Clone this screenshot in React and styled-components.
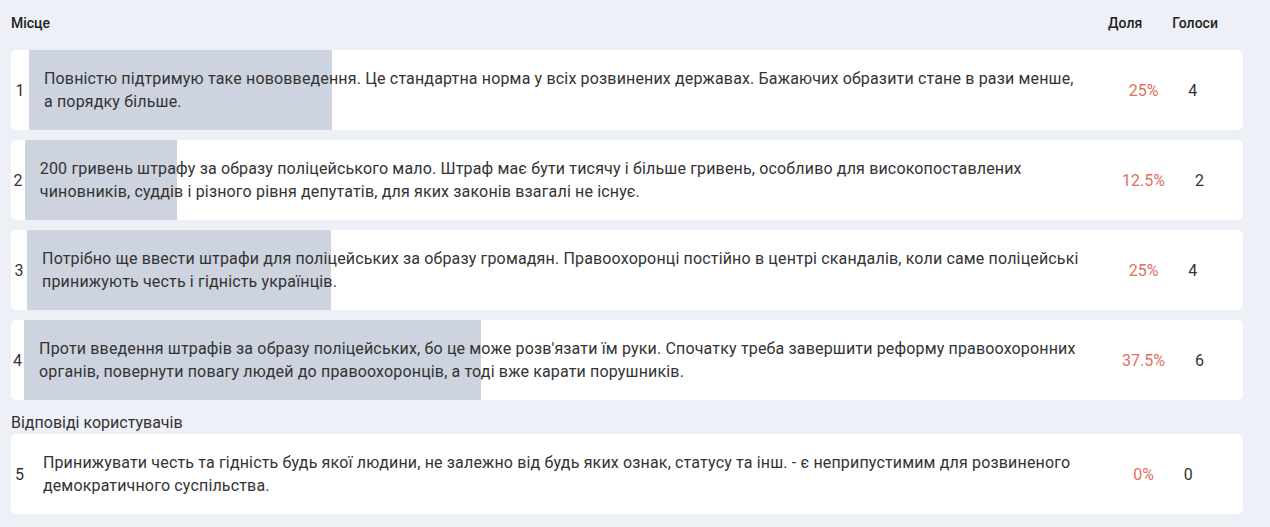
import React from "react";
import styled, { createGlobalStyle } from "styled-components";

const GlobalStyle = createGlobalStyle`
  html, body {
    margin: 0;
    padding: 0;
    background: #edf0f7;
  }
  body {
    font-family: Roboto, "Liberation Sans", Arial, sans-serif;
    color: #333333;
  }
`;

const Page = styled.div`
  width: 1232px;
  padding: 0 27px 13px 11px;
  background: #edf0f7;
`;

const HeaderRow = styled.div`
  display: flex;
  align-items: center;
  height: 46px;
  margin-bottom: 4px;
  font-size: 14px;
  font-weight: 500;
  color: #222;
`;

const HeaderLabel = styled.div`
  flex: 1 1 auto;
`;

const StatsBox = styled.div`
  flex: 0 0 160px;
  display: flex;
  justify-content: center;
  align-items: center;
  position: relative;
`;

const StatCell = styled.div`
  padding: 0 15px;
  white-space: nowrap;
  color: ${(p) => (p.$accent ? "#e0705f" : "inherit")};
`;

const List = styled.div`
  display: flex;
  flex-direction: column;
  gap: 10px;
`;

const Card = styled.div`
  display: flex;
  align-items: stretch;
  min-height: 80px;
  background: #ffffff;
  border-radius: 5px;
  font-size: 16px;
  line-height: 23px;
  color: #333333;
`;

const Num = styled.div`
  flex: 0 1 20px;
  min-width: 0;
  display: flex;
  align-items: center;
  justify-content: center;
  white-space: nowrap;
`;

const Body = styled.div`
  flex: 1 1 auto;
  position: relative;
  display: flex;
  align-items: center;
`;

const Bar = styled.div`
  position: absolute;
  left: 0;
  top: 0;
  bottom: 0;
  background: #cdd3df;
`;

const Text = styled.div`
  position: relative;
  flex: 1 1 auto;
  min-width: 0;
  padding: 0 4px 0 15px;
  letter-spacing: 0.16px;
`;

const SectionTitle = styled.div`
  margin-top: 10px;
  height: 24px;
  display: flex;
  align-items: center;
  font-size: 16px;
  color: #333333;
`;

const Row = ({ n, text, pct, votes }) => (
  <Card>
    <Num>{n}</Num>
    <Body>
      {pct > 0 && <Bar style={{ width: `${pct}%` }} />}
      <Text>{text}</Text>
      <StatsBox>
        <StatCell $accent>{pct}%</StatCell>
        <StatCell>{votes}</StatCell>
      </StatsBox>
    </Body>
  </Card>
);

const rows = [
  {
    n: 1,
    text: "Повністю підтримую таке нововведення. Це стандартна норма у всіх розвинених державах. Бажаючих образити стане в рази менше, а порядку більше.",
    pct: 25,
    votes: 4,
  },
  {
    n: 2,
    text: "200 гривень штрафу за образу поліцейського мало. Штраф має бути тисячу і більше гривень, особливо для високопоставлених чиновників, суддів і різного рівня депутатів, для яких законів взагалі не існує.",
    pct: 12.5,
    votes: 2,
  },
  {
    n: 3,
    text: "Потрібно ще ввести штрафи для поліцейських за образу громадян. Правоохоронці постійно в центрі скандалів, коли саме поліцейські принижують честь і гідність українців.",
    pct: 25,
    votes: 4,
  },
  {
    n: 4,
    text: "Проти введення штрафів за образу поліцейських, бо це може розв'язати їм руки. Спочатку треба завершити реформу правоохоронних органів, повернути повагу людей до правоохоронців, а тоді вже карати порушників.",
    pct: 37.5,
    votes: 6,
  },
];

const userRows = [
  {
    n: 5,
    text: "Принижувати честь та гідність будь якої людини, не залежно від будь яких ознак, статусу та інш. - є неприпустимим для розвиненого демократичного суспільства.",
    pct: 0,
    votes: 0,
  },
];

export default function App() {
  return (
    <>
      <GlobalStyle />
      <Page>
        <HeaderRow>
          <HeaderLabel>Місце</HeaderLabel>
          <StatsBox>
            <StatCell>Доля</StatCell>
            <StatCell>Голоси</StatCell>
          </StatsBox>
        </HeaderRow>
        <List>
          {rows.map((r) => (
            <Row key={r.n} {...r} />
          ))}
        </List>
        <SectionTitle>Відповіді користувачів</SectionTitle>
        <List>
          {userRows.map((r) => (
            <Row key={r.n} {...r} />
          ))}
        </List>
      </Page>
    </>
  );
}
